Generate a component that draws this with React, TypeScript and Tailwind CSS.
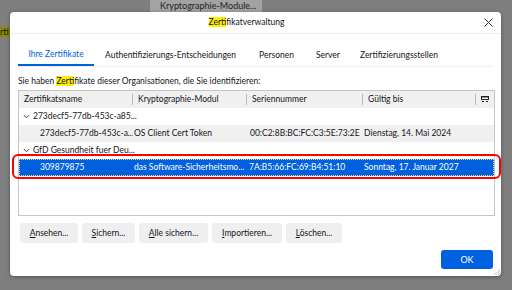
import React from "react";

const font = { fontFamily: 'Lato, "Noto Sans", sans-serif' };

function Chevron() {
  return (
    <svg width="7" height="5" viewBox="0 0 7 5" className="mr-[3px] shrink-0">
      <path d="M0.8 1 L3.5 3.8 L6.2 1" fill="none" stroke="#333" strokeWidth="0.9" />
    </svg>
  );
}

function Btn({ u, rest, w }: { u: string; rest: string; w: string }) {
  return (
    <div className={`${w} h-[20px] rounded-[3px] bg-[#efefef] flex items-center justify-center text-[#15141a]`}>
      <span>
        <span className="underline underline-offset-1">{u}</span>
        {rest}
      </span>
    </div>
  );
}

export default function App() {
  return (
    <div className="w-[512px] h-[290px] bg-[#7f7f7f] relative overflow-hidden text-[8.5px]" style={font}>
      {/* background window fragments */}
      <div className="absolute left-[150px] top-0 w-[112px] h-[12px] bg-[#a3a3a3] text-[#222] pl-[10px] leading-[12px] text-[9px] whitespace-nowrap overflow-hidden">
        Kryptographie-Module...
      </div>
      <div className="absolute left-0 top-[27px] w-[10px] h-[10px] bg-[#8a8a00] text-[#111] leading-[10px] overflow-hidden text-[9px] whitespace-nowrap">
        rti
      </div>

      <div className="absolute left-[10px] top-[12px] w-[491px] h-[264px] bg-white rounded-[4px] shadow-[0_1px_4px_rgba(0,0,0,0.35)] flex flex-col text-[#15141a]">
        {/* title */}
        <div className="h-[22px] border-b border-[#ececec] flex items-center justify-center relative shrink-0 text-[8.5px] pr-[18px]">
          <span>
            <span className="bg-[#ffee00]">Zert</span>ifikatverwaltung
          </span>
          <svg className="absolute right-[8px] top-[6px]" width="9" height="9" viewBox="0 0 9 9">
            <path d="M0.5 0.5 L8.5 8.5 M8.5 0.5 L0.5 8.5" stroke="#333" strokeWidth="1" />
          </svg>
        </div>

        {/* tabs */}
        <div className="mx-[8px] mt-[10px] h-[23px] flex items-stretch border-b border-[#f0f0f0] shrink-0 whitespace-nowrap">
          <div className="w-[76px] flex items-center justify-center text-[#0061e0] border-b-2 border-[#0061e0]">
            Ihre Zertifikate
          </div>
          <div className="ml-[11px] flex items-center">Authentifizierungs-Entscheidungen</div>
          <div className="ml-[23px] flex items-center">Personen</div>
          <div className="ml-[22px] flex items-center">Server</div>
          <div className="ml-[20px] flex items-center">Zertifizierungsstellen</div>
        </div>

        <div className="mx-[8px] mt-[8px] h-[12px] leading-[12px] whitespace-nowrap">
          Sie haben <span className="bg-[#ffee00]">Zert</span>ifikate dieser Organisationen, die Sie identifizieren:
        </div>

        {/* table */}
        <div className="ml-[8px] mr-[6px] mt-[3px] h-[126px] border border-[#c6c6c6] flex flex-col shrink-0 whitespace-nowrap">
          <div className="h-[17px] bg-[#f0f0f0] flex items-center shrink-0">
            <div className="w-[114px] pl-[5px] border-r border-[#b8b8b8] h-[11px] leading-[11px]">Zertifikatsname</div>
            <div className="w-[114px] pl-[5px] border-r border-[#b8b8b8] h-[11px] leading-[11px]">Kryptographie-Modul</div>
            <div className="w-[116px] pl-[5px] border-r border-[#b8b8b8] h-[11px] leading-[11px]">Seriennummer</div>
            <div className="w-[113px] pl-[5px] border-r border-[#b8b8b8] h-[11px] leading-[11px]">Gültig bis</div>
            <div className="flex-1 flex items-center justify-center">
              <svg width="8" height="7" viewBox="0 0 8 7">
                <rect x="0.5" y="0.5" width="7" height="3" fill="none" stroke="#222" strokeWidth="1" />
                <rect x="0" y="0" width="8" height="1.5" fill="#222" />
                <path d="M1 5.5 H3 M5 5.5 H7" stroke="#222" strokeWidth="1" />
              </svg>
            </div>
          </div>
          <div className="h-[17px] flex items-center pl-[4px]">
            <Chevron />
            <span>273decf5-77db-453c-a85...</span>
          </div>
          <div className="h-[17px] flex items-center bg-[#f0f0f0]">
            <div className="w-[114px] pl-[21px] overflow-hidden">273decf5-77db-453c-a...</div>
            <div className="w-[114px] pl-[1px] overflow-hidden">OS Client Cert Token</div>
            <div className="w-[116px] pl-[3px] overflow-hidden">00:C2:8B:BC:FC:C3:5E:73:2E</div>
            <div className="w-[113px] pl-[1px]">Dienstag, 14. Mai 2024</div>
          </div>
          <div className="h-[17px] flex items-center pl-[4px]">
            <Chevron />
            <span>GfD Gesundheit fuer Deu...</span>
          </div>
          <div className="h-[17px] flex items-center bg-[#0060df] text-white border border-dotted border-[#e8d27a]">
            <div className="w-[113px] pl-[20px]">309879875</div>
            <div className="w-[114px] pl-[1px] overflow-hidden">das Software-Sicherheitsmo...</div>
            <div className="w-[116px] pl-[2px] overflow-hidden">7A:B5:66:FC:69:B4:51:10</div>
            <div className="w-[113px] pl-[1px]">Sonntag, 17. Januar 2027</div>
          </div>
        </div>

        {/* buttons */}
        <div className="ml-[10px] mt-[7px] flex gap-[4px] shrink-0 whitespace-nowrap">
          <Btn u="A" rest="nsehen..." w="w-[58px]" />
          <Btn u="S" rest="ichern..." w="w-[53px]" />
          <Btn u="A" rest="lle sichern..." w="w-[69px]" />
          <Btn u="I" rest="mportieren..." w="w-[70px]" />
          <Btn u="L" rest="öschen..." w="w-[56px]" />
        </div>

        <div className="flex justify-end mr-[8px] mt-[7px]">
          <div className="w-[52px] h-[19px] bg-[#0061e0] rounded-[3px] text-white flex items-center justify-center text-[9px]">
            OK
          </div>
        </div>

        <svg className="absolute right-0 bottom-0" width="8" height="8" viewBox="0 0 8 8">
          <path d="M7 1 L1 7 M7 3 L3 7 M7 5 L5 7" stroke="#888" strokeWidth="0.8" strokeDasharray="1 1" />
        </svg>
      </div>

      {/* red annotation */}
      <div className="absolute left-[12px] top-[154px] w-[489px] h-[25px] border-2 border-[#ff0000] rounded-[6px]" />
    </div>
  );
}
